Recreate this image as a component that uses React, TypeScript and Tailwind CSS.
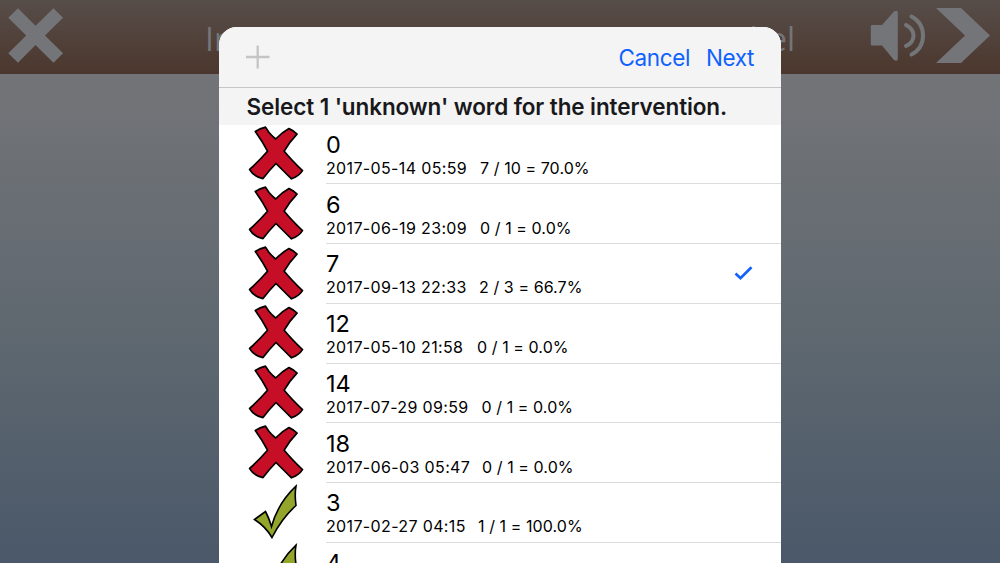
import React from "react";

interface IWord {
  id: string;
  name: string;
  date: string;
  score: string;
  known: boolean;
  selected?: boolean;
  dateWidth: string;
}

const words: IWord[] = [
  { id: "a", name: "0", date: "2017-05-14 05:59", score: "7 / 10 = 70.0%", known: false, dateWidth: "w-[154px]" },
  { id: "b", name: "6", date: "2017-06-19 23:09", score: "0 / 1 = 0.0%", known: false, dateWidth: "w-[154px]" },
  { id: "c", name: "7", date: "2017-09-13 22:33", score: "2 / 3 = 66.7%", known: false, selected: true, dateWidth: "w-[153px]" },
  { id: "d", name: "12", date: "2017-05-10 21:58", score: "0 / 1 = 0.0%", known: false, dateWidth: "w-[151px]" },
  { id: "e", name: "14", date: "2017-07-29 09:59", score: "0 / 1 = 0.0%", known: false, dateWidth: "w-[155.5px]" },
  { id: "f", name: "18", date: "2017-06-03 05:47", score: "0 / 1 = 0.0%", known: false, dateWidth: "w-[156px]" },
  { id: "g", name: "3", date: "2017-02-27 04:15", score: "1 / 1 = 100.0%", known: true, dateWidth: "w-[152px]" },
  { id: "h", name: "4", date: "2017-02-27 04:16", score: "1 / 1 = 100.0%", known: true, dateWidth: "w-[152px]" },
];

const CrossIcon = () => (
  <svg className="h-[60px] w-[60px]" viewBox="0 0 60 60">
    <path
      d="M9.3 6.5 Q14 3.5 19.5 2.2 L23 7.500 Q26 11 29.6 14 Q36 7.500 43 3.600 Q47.500 5.500 51 9.200 Q43.500 17 38.2 26.2 Q45 34.500 56.500 45.600 Q53 51 45.500 53.800 Q38 46.500 30 38.500 Q23.500 45 17 53.600 Q8 52 3.600 44.500 Q12 37 21.500 26.200 Q16.500 16.500 9.300 6.500Z"
      fill="#c60f26"
      stroke="#000"
      strokeWidth="1.7"
      strokeLinejoin="round"
    />
  </svg>
);

const TickIcon = () => (
  <svg className="h-[60px] w-[60px]" viewBox="0 0 60 60">
    <path
      d="M8.500 35.500 L19.500 27.500 Q23 34 25.500 42.500 Q32 19 50 2.200 Q48.500 11 50 21.500 Q36 34 26 53.500 Q19.500 42.500 8.500 35.500Z"
      fill="#93a52b"
      stroke="#000"
      strokeWidth="1.6"
    />
  </svg>
);

const WordRow: React.FC<{ word: IWord }> = ({ word }) => (
  <li className="flex h-[59.75px] shrink-0 pl-[27px]">
    <div className="w-20 shrink-0 pt-[0.7px]">{word.known ? <TickIcon /> : <CrossIcon />}</div>
    <div className="flex flex-1 items-center justify-between border-b border-[#dcdcdd] pr-[28px]">
      <div className="pt-px">
        <p className="text-[23.5px] leading-[27px]">{word.name}</p>
        <p className="flex pt-px text-[16px] leading-[19px] whitespace-pre">
          <span className={`${word.dateWidth} shrink-0 tracking-[0.36px]`}>{word.date}</span>
          <span className="tracking-[0.08px]">{word.score}</span>
        </p>
      </div>
      {word.selected && (
        <svg className="h-4 w-[19px]" viewBox="0 0 19 16" fill="none">
          <path d="M1.500 8.500 L6.500 13.200 L17.500 2.300" stroke="#0f62fe" strokeWidth="2.700" />
        </svg>
      )}
    </div>
  </li>
);

const Toolbar = () => (
  <header className="flex h-[74px] items-start justify-between bg-gradient-to-b from-[#574d49] to-[#4b372d] text-[#737579]">
    <svg className="h-[73px] w-[70px]" viewBox="0 0 70 73">
      <path
        d="M18 8.300 L35.500 25.800 L53.500 8.300 L63 17.800 L45 35.500 L63 53.300 L53.500 62.800 L35.500 45 L18 62.800 L8.300 53.300 L26.200 35.500 L8.300 17.800Z"
        fill="currentColor"
      />
    </svg>
    <h1 className="flex flex-1 justify-between pt-[21px] pr-[73px] pl-[135px] font-['Open_Sans',sans-serif] text-[32px] leading-[36px]">
      <span>In</span>
      <span>bel</span>
    </h1>
    <svg className="h-[73px] w-[132px]" viewBox="868 0 132 73">
      <path
        d="M872 25h10l12-13.500q3.800-2 3.800 1v46q0 3.500-3.800 1.500L882 45.500h-10q-1.200 0-1.200-1.200v-18q0-1.300 1.200-1.300Z"
        fill="currentColor"
      />
      <path
        d="M906 25q7.500 4 7.500 10.700T906 46M911.500 16.500q11.500 6 11.500 19T911.500 54.500"
        fill="none"
        stroke="currentColor"
        strokeWidth="4"
        strokeLinecap="round"
      />
      <path d="M936 8h25l29 27.500L961 63h-25l29-27.500Z" fill="currentColor" />
    </svg>
  </header>
);

const App: React.FC = () => {
  return (
    <main className="relative h-[563px] w-[1000px] overflow-hidden bg-[#737579] font-[Inter,sans-serif] text-black">
      <Toolbar />
      <div className="h-[489px] bg-gradient-to-b from-[#737478] via-[#606970] to-[#4a5869]" />
      <section className="absolute top-[27px] left-[219px] flex h-[536px] w-[562px] flex-col overflow-hidden rounded-t-[18px] bg-white">
        <div className="flex h-[61px] shrink-0 items-center justify-between border-b border-[#c6c6c8] bg-[#f4f4f5] px-[27px]">
          <svg className="h-6 w-6" viewBox="0 0 24 24">
            <path d="M0 12h23.500M11.700 0.500v23" stroke="#c4c4c6" strokeWidth="2.300" />
          </svg>
          <div className="flex gap-4 pt-px text-[22.500px] tracking-[-0.4px] text-[#0f62fe]">
            <button>Cancel</button>
            <button>Next</button>
          </div>
        </div>
        <h2 className="h-[37px] shrink-0 bg-[#f4f4f5] pl-[27.500px] text-[22.500px] leading-[38px] font-semibold tracking-[-0.1px] text-[#19191b]">
          Select 1 'unknown' word for the intervention.
        </h2>
        <ul className="-mt-[0.500px]">
          {words.map((word) => (
            <WordRow key={word.id} word={word} />
          ))}
        </ul>
      </section>
    </main>
  );
};

export default App;
